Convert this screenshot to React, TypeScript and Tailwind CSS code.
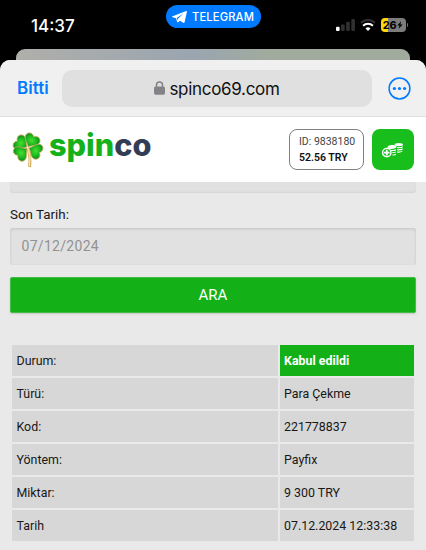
const rows = [
  { label: 'Durum:', value: 'Kabul edildi', highlighted: true },
  { label: 'Türü:', value: 'Para Çekme' },
  { label: 'Kod:', value: '221778837' },
  { label: 'Yöntem:', value: 'Payfix' },
  { label: 'Miktar:', value: '9 300 TRY' },
  { label: 'Tarih', value: '07.12.2024 12:33:38' },
];

function classNames(...classes: (string | false | undefined)[]) {
  return classes.filter(Boolean).join(' ');
}

function TelegramIcon() {
  return (
    <svg width="15" height="12" viewBox="0 0 15 12" fill="white" aria-hidden="true">
      <path d="M14.2 0.1 0.6 5.2c-0.7 0.3-0.7 0.8 0 1l3.3 1.1 1.3 3.8c0.2 0.5 0.5 0.5 0.9 0.2l1.8-1.6 3.4 2.1c0.7 0.4 1.1 0.1 1.3-0.6L14.9 0.9c0.1-0.6-0.2-1-0.7-0.8Z" />
      <path d="M4.7 7.1 11.4 2.6 6 7.7 5.7 9.5Z" fill="#007aff" />
    </svg>
  );
}

function SignalIcon() {
  return (
    <svg width="19" height="12" viewBox="0 0 19 12" aria-hidden="true">
      <rect x="0" y="7.8" width="3.6" height="4.2" rx="1" fill="#fff" />
      <rect x="5.1" y="5.4" width="3.6" height="6.6" rx="1" fill="#303030" />
      <rect x="10.2" y="2.8" width="3.6" height="9.2" rx="1" fill="#303030" />
      <rect x="15.3" y="0" width="3.6" height="12" rx="1" fill="#303030" />
    </svg>
  );
}

function WifiIcon() {
  return (
    <svg width="16" height="12" viewBox="0 0 16 12" fill="none" aria-hidden="true">
      <path d="M0.9 3.9a10.2 10.2 0 0 1 14.2 0" stroke="#303030" strokeWidth="2" />
      <path d="M3.1 6.7a7 7 0 0 1 9.8 0" stroke="#fff" strokeWidth="2" />
      <path d="M5.5 9.4a3.6 3.6 0 0 1 5 0L8 12Z" fill="#fff" />
    </svg>
  );
}

function Battery() {
  return (
    <div className="flex items-center gap-px">
      <div className="flex h-[14px] w-[25px] items-center justify-center rounded-[4px] bg-[linear-gradient(to_right,#ffd60a_27%,#7c7c7c_27%)] font-[Inter,sans-serif] text-[11px] leading-none font-bold tracking-[-0.3px] text-black">
        26
        <svg width="6" height="8" viewBox="0 0 7 9" className="ml-px" aria-hidden="true">
          <path d="M4.8 0 0.3 5h2.6L2 9l4.7-5.2H4Z" />
        </svg>
      </div>
      <div className="h-1 w-[1.5px] rounded-r-full bg-[#6e6e6e]" />
    </div>
  );
}

function LockIcon() {
  return (
    <svg width="11" height="14" viewBox="0 0 11 14" aria-hidden="true">
      <path d="M2.5 7V4a3 3 0 0 1 6 0v3" fill="none" stroke="#828287" strokeWidth="1.5" />
      <rect y="5.6" width="11" height="8.2" rx="1.7" fill="#828287" />
    </svg>
  );
}

function MoreIcon() {
  return (
    <svg width="23" height="23" viewBox="0 0 23 23" fill="#007aff" aria-hidden="true">
      <circle cx="11.5" cy="11.5" r="10.4" fill="none" stroke="#007aff" strokeWidth="1.5" />
      <circle cx="6.4" cy="11.5" r="1.6" />
      <circle cx="11.5" cy="11.5" r="1.6" />
      <circle cx="16.6" cy="11.5" r="1.6" />
    </svg>
  );
}

// One heart shaped leaf with its tip on the origin, lobes pointing up
const leaf = 'M0 0C-2-3-7.6-4.6-7.8-9C-7.9-13.2-2.6-14.8 0-11.2C2.6-14.8 7.9-13.2 7.8-9C7.6-4.6 2-3 0 0Z';

function Clover() {
  return (
    <svg width="34" height="37" viewBox="0 0 34 37" aria-hidden="true">
      <defs>
        <radialGradient id="leaf-fill" cx="50%" cy="45%" r="60%">
          <stop offset="0" stopColor="#45e02e" />
          <stop offset="0.55" stopColor="#1cb81f" />
          <stop offset="1" stopColor="#078012" />
        </radialGradient>
      </defs>
      <path d="M16.5 17C19.3 23 19.4 29 18.6 36" fill="none" stroke="#c99a45" strokeWidth="2.8" />
      <path d="M16.5 17C19.2 23 19.2 29 18.5 35.5" fill="none" stroke="#f9e3a2" strokeWidth="1.5" />
      <g fill="url(#leaf-fill)" stroke="#c4a65a" strokeWidth="0.8">
        <path d={leaf} transform="translate(16 16) rotate(-58)" />
        <path d={leaf} transform="translate(17.2 15.8) rotate(29)" />
        <path d={leaf} transform="translate(16 17.6) rotate(-127)" />
        <path d={leaf} transform="translate(18 17) rotate(114)" />
      </g>
      <path d="M17.2 17.5C18.8 21.5 19.1 25 19 29" fill="none" stroke="#f3dc97" strokeWidth="1.4" />
    </svg>
  );
}

function CoinsIcon() {
  return (
    <svg width="22" height="16" viewBox="0 0 22 16" aria-hidden="true">
      <g fill="none" stroke="#fff" strokeWidth="1.1">
        <path d="M15 5.4c1.8.6 4.4.2 5.8-.8M15.2 7.6c1.8.5 4.2.1 5.5-.8M15.2 9.9c1.8.4 3.9 0 5.1-.8" />
        <path d="M9.2 8.2c1.5.5 3.5.2 4.8-.5M10.4 10.4c1.2.3 2.6.1 3.6-.5M10.4 12.8c1.2.3 2.5.1 3.5-.5" />
      </g>
      <ellipse cx="16.8" cy="2.6" rx="4.2" ry="1.7" fill="#fff" />
      <ellipse cx="10" cy="5" rx="4.5" ry="2" fill="#fff" transform="rotate(-5 10 5)" />
      <circle cx="4.8" cy="10.6" r="4.2" fill="#17be1c" stroke="#fff" strokeWidth="1.4" />
      <path d="M4.8 7.8v5.6M2 10.6h5.6" stroke="#fff" strokeWidth="1.8" />
    </svg>
  );
}

function StatusBar() {
  return (
    <div className="flex h-[49px] items-start justify-between pr-[18px] pl-[31px]">
      <p className="mt-[14px] w-[135px] text-[17px] leading-6 font-medium text-white">14:37</p>
      <div className="mt-[5px] -ml-[13px] flex h-[23px] w-[95px] items-center justify-center gap-[5px] rounded-full bg-[#007aff] text-[11.2px] font-medium tracking-[0.15px] text-white">
        <TelegramIcon />
        <span className="pt-px">TELEGRAM</span>
      </div>
      <div className="mt-[18px] flex w-[135px] items-center justify-end gap-[5px]">
        <SignalIcon />
        <WifiIcon />
        <Battery />
      </div>
    </div>
  );
}

export default function App() {
  return (
    <div className="h-[550px] w-[426px] overflow-hidden bg-black font-[Inter,sans-serif]">
      <StatusBar />
      <div className="mx-4 h-[11px] rounded-t-[9px] bg-linear-to-r from-[#b0afaa] via-[#9aa5b0] via-45% to-[#a1ab9d] to-65%" />
      <div className="h-[490px] overflow-hidden rounded-t-[10px] bg-[#e9e9e9]">
        <div className="flex h-[57px] items-center border-b border-[#dedede] bg-[#f0f0f0] pr-[15px] pl-[17px]">
          <button className="w-[45px] pt-[2px] text-left text-[17px] font-semibold text-[#007aff]">Bitti</button>
          <div className="flex h-[37px] w-[310px] items-center justify-center gap-1 rounded-[10px] bg-[#e0e0e0] text-[17px] tracking-[-0.3px] text-[#111]">
            <LockIcon />
            <span className="pt-[3px]">spinco69.com</span>
          </div>
          <button className="ml-auto">
            <MoreIcon />
          </button>
        </div>

        <header className="flex h-[65px] items-center bg-white pr-[12px] pl-[11px] font-[Roboto,sans-serif]">
          <Clover />
          <svg width="106" height="48" viewBox="0 0 106 48" className="ml-[3px]" role="img" aria-label="spinco">
            <text x="1" y="30" fontFamily="Inter, sans-serif" fontSize="31" fontWeight="800" textLength="102.5" lengthAdjust="spacingAndGlyphs" fill="#15b11a">
              spin<tspan fill="#343d56">co</tspan>
            </text>
          </svg>
          <div className="ml-auto flex h-[41px] w-[75px] flex-col justify-center rounded-[8px] border border-[#808080] pl-[9px] text-[10.5px] leading-[16px]">
            <span className="whitespace-nowrap text-[#444]">ID: 9838180</span>
            <span className="font-semibold text-[#111]">52.56 TRY</span>
          </div>
          <button className="ml-2 flex h-[41px] w-[42px] items-center justify-center rounded-[8px] bg-[#17be1c]">
            <CoinsIcon />
          </button>
        </header>

        <main className="px-[10px] font-[Roboto,sans-serif] text-[#181818]">
          <div className="h-[11px] rounded-b-[3px] bg-[#e1e1e1] shadow-[inset_0_-1px_2px_#d3d3d3]" />
          <p className="mt-[13px] text-[13.4px] leading-[18px]">Son Tarih:</p>
          <div className="mt-[4px] flex h-[37px] items-center rounded-[3px] bg-[#e1e1e1] px-[11.5px] text-[14px] tracking-[0.3px] text-[#929292] shadow-[inset_0_1px_3px_#c4c4c4]">
            07/12/2024
          </div>
          <button className="mt-[12px] block h-[36px] w-full rounded-[2px] border border-[#43bb47] bg-[#14b018] text-[15px] text-white shadow-[0_1px_2px_#c8c8c8]">
            ARA
          </button>

          <div className="mx-[2px] mt-[32px] space-y-[2px] text-[12.4px]">
            {rows.map((row) => (
              <div key={row.label} className="grid h-[31px] grid-cols-[266px_134px] gap-[2px]">
                <div className="flex items-center bg-[#d7d7d7] px-[4.5px] pt-[2px]">{row.label}</div>
                <div
                  className={classNames(
                    'flex items-center px-[4px] pt-[2px]',
                    row.highlighted ? 'bg-[#14b018] font-bold text-white' : 'bg-[#d7d7d7]',
                  )}
                >
                  {row.value}
                </div>
              </div>
            ))}
          </div>
        </main>
      </div>
    </div>
  );
}
